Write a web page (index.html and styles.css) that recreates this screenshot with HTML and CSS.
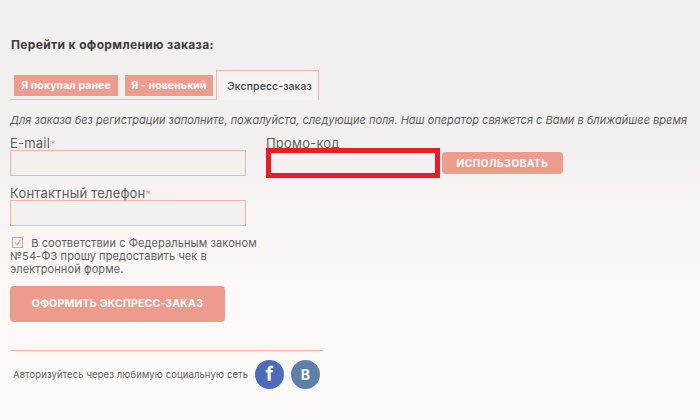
FILE: index.html
```html
<!DOCTYPE html>
<html lang="ru">
<head>
<meta charset="utf-8">
<title>Оформление заказа</title>
<link rel="stylesheet" href="styles.css">
</head>
<body>
<main class="page">
  <h2 class="title">Перейти к оформлению заказа:</h2>
  <div class="tabs">
    <a class="tab">Я покупал ранее</a>
    <a class="tab">Я - новенький</a>
    <a class="tab tab-active">Экспресс-заказ</a>
  </div>
  <p class="note">Для заказа без регистрации заполните, пожалуйста, следующие поля. Наш оператор свяжется с Вами в ближайшее время</p>
  <div class="form">
    <div class="col-main">
      <div class="field">
        <label class="label">E-mail<span class="req">*</span></label>
        <div class="input"></div>
      </div>
      <div class="field">
        <label class="label">Контактный телефон<span class="req">*</span></label>
        <div class="input"></div>
      </div>
    </div>
    <div class="col-promo">
      <label class="label">Промо-код</label>
      <div class="promo-row">
        <div class="promo-input"></div>
        <button class="btn-use">ИСПОЛЬЗОВАТЬ</button>
      </div>
    </div>
  </div>
  <div class="consent">
    <span class="check"><svg viewBox="0 0 11 11" width="11" height="11"><path d="M3 5.5 L5 8 L8.2 3" fill="none" stroke="#ee9c8e" stroke-width="1.2"/></svg></span>
    <span class="consent-first">В соответствии с Федеральным законом</span><br>№54-ФЗ прошу предоставить чек в<br>электронной форме.
  </div>
  <button class="btn-order">ОФОРМИТЬ ЭКСПРЕСС-ЗАКАЗ</button>
  <div class="social">
    <span class="social-text">Авторизуйтесь через любимую социальную сеть</span>
    <a class="circle fb">f</a>
    <a class="circle vk">B</a>
  </div>
</main>
</body>
</html>
```
FILE: styles.css
```css
html, body { margin: 0; height: 100%; }
body {
  width: 700px;
  height: 420px;
  overflow: hidden;
  background: linear-gradient(#f2f0ef 0, #f2f0ef 140px, #fdf9f8 290px, #fdf9f8 100%);
  font-family: Inter, "Open Sans", "DejaVu Sans", sans-serif;
  color: #4a4a4a;
}
.page { padding: 37px 0 0 10px; }
.title { margin: 0 0 0 1px; font-size: 12px; line-height: 15px; font-weight: 700; color: #3c3c3e; letter-spacing: .35px; }
.tabs {
  display: flex;
  align-items: flex-end;
  width: 206px;
  height: 28px;
  margin-top: 19px;
  border-bottom: 1px solid #f3b5a8;
}
.tab {
  height: 21px;
  line-height: 21px;
  margin: 0 7px 3px 4px;
  padding: 0 4px;
  flex: none;
  background: #ee9c8e;
  color: #fff;
  font-size: 10.5px;
  font-weight: 700;
  letter-spacing: .1px;
  text-align: center;
}
.tab:nth-child(1) { width: 96px; margin-right: 3px; }
.tab:nth-child(2) { width: 80px; margin-left: 4px; margin-right: 3px; }
.tab-active {
  width: 91px;
  height: 29px;
  line-height: 31px;
  margin: 0 0 -1px 0;
  padding: 0 3px 0 7px;
  background: #f5f3f2;
  color: #45454a;
  font-weight: 500;
  border: 1px solid #f3b5a8;
  border-bottom: 0;
}
.note { margin: 13px 0 0; font-size: 11px; line-height: 14px; font-style: italic; color: #5e5e62; white-space: nowrap; }
.form { display: flex; margin-top: 9px; }
.col-main { width: 236px; }
.field { margin-bottom: 10px; }
.label { display: block; font-size: 13px; line-height: 15px; color: #5e5e62; height: 14px; letter-spacing: .2px; }
.req { color: #ee9c8e; font-size: 11px; }
.input { height: 24px; border: 1px solid #f3b5a8; background: #f3f1f0; }
.col-promo { margin-left: 20px; }
.promo-row { display: flex; align-items: center; margin-top: -2px; }
.promo-input { width: 164px; height: 20px; border: 5px solid #ed1c24; background: #f3f1f0; }
.btn-use {
  width: 121px;
  height: 22px;
  margin-left: 2px;
  padding: 0;
  border: 0;
  border-radius: 4px;
  background: #ee9c8e;
  color: #fff;
  font: 700 10px/22px Inter, "DejaVu Sans", sans-serif;
  letter-spacing: .6px;
}
.consent { margin-top: 1px; font-size: 11px; line-height: 13px; color: #5e5e62; white-space: nowrap; letter-spacing: .1px; }
.check {
  display: inline-flex;
  box-sizing: border-box;
  width: 11px;
  height: 11px;
  margin: 0 5px 0 2px;
  vertical-align: -1px;
  border: 1px solid #ee9c8e;
}
.check svg { flex: none; margin: -1px; }
.btn-order {
  display: block;
  width: 215px;
  height: 36px;
  margin-top: 10px;
  padding: 0;
  border: 0;
  border-radius: 4px;
  background: #ec9b8d;
  color: #fff;
  font: 700 10.5px/36px Inter, "DejaVu Sans", sans-serif;
  letter-spacing: .2px;
}
.social {
  display: flex;
  align-items: center;
  box-sizing: border-box;
  width: 313px;
  height: 40px;
  margin-top: 28px;
  padding: 8px 3px 0;
  border-top: 1px solid #f6b3a5;
}
.social-text { width: 242px; font-size: 9.5px; color: #5f5f63; white-space: nowrap; letter-spacing: .1px; }
.circle {
  flex: none;
  width: 29px;
  height: 29px;
  border-radius: 50%;
  color: #fff;
  text-align: center;
  font-weight: 700;
  line-height: 29px;
}
.fb { background: #4c6bbd; font-size: 20px; }
.vk { margin-left: 7px; background: #5d80aa; font-size: 14px; }
```
